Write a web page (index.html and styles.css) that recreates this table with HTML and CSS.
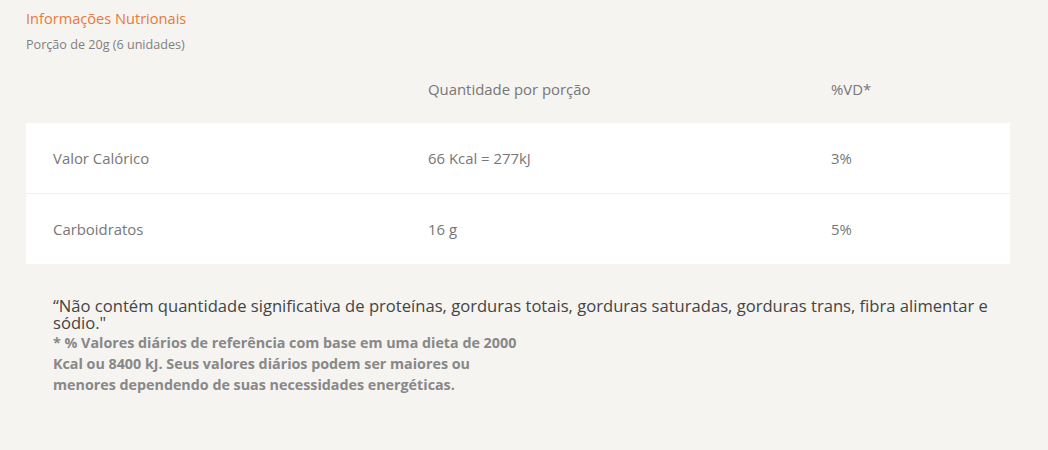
FILE: index.html
```html
<!DOCTYPE html>
<html lang="pt">
<head>
<meta charset="utf-8">
<link rel="stylesheet" href="styles.css">
</head>
<body>
<section class="nutri">
  <h2 class="title">Informações Nutrionais</h2>
  <p class="portion">Porção de 20g (6 unidades)</p>
  <div class="row head">
    <span></span>
    <span>Quantidade por porção</span>
    <span>%VD*</span>
  </div>
  <div class="table">
    <div class="row">
      <span>Valor Calórico</span>
      <span>66 Kcal = 277kJ</span>
      <span>3%</span>
    </div>
    <div class="row">
      <span>Carboidratos</span>
      <span>16 g</span>
      <span>5%</span>
    </div>
  </div>
  <div class="notes">
    <p class="quote">“Não contém quantidade significativa de proteínas, gorduras totais, gorduras saturadas, gorduras trans, fibra alimentar e sódio."</p>
    <p class="ref">* % Valores diários de referência com base em uma dieta de 2000 Kcal ou 8400 kJ. Seus valores diários podem ser maiores ou menores dependendo de suas necessidades energéticas.</p>
  </div>
</section>
</body>
</html>
```

FILE: styles.css
```css
html, body {
  margin: 0;
  padding: 0;
  background: #f5f4f1;
}
body {
  font-family: "Open Sans", "Noto Sans", sans-serif;
  color: #777;
}
.nutri {
  padding: 8px 38px 0 26px;
}
.title {
  margin: 0;
  font-size: 14.6px;
  font-weight: 400;
  color: #e8793a;
  line-height: 20px;
}
.portion {
  margin: 8px 0 0;
  font-size: 12.6px;
  line-height: 18px;
  color: #808080;
}
.row {
  display: grid;
  grid-template-columns: 375px 403px 1fr;
  padding-left: 27px;
  font-size: 14.9px;
  align-items: center;
}
.head {
  height: 69px;
}
.table {
  background: #fff;
}
.table .row {
  height: 70px;
}
.table .row + .row {
  border-top: 1px solid #f1f0ed;
}
.notes {
  padding: 33px 0 0 27px;
}
.quote {
  margin: 0;
  font-size: 16.6px;
  line-height: 17px;
  color: #444;
}
.ref {
  margin: 1px 0 0;
  width: 470px;
  font-size: 14.3px;
  font-weight: 700;
  line-height: 21px;
  color: #888;
}
```
